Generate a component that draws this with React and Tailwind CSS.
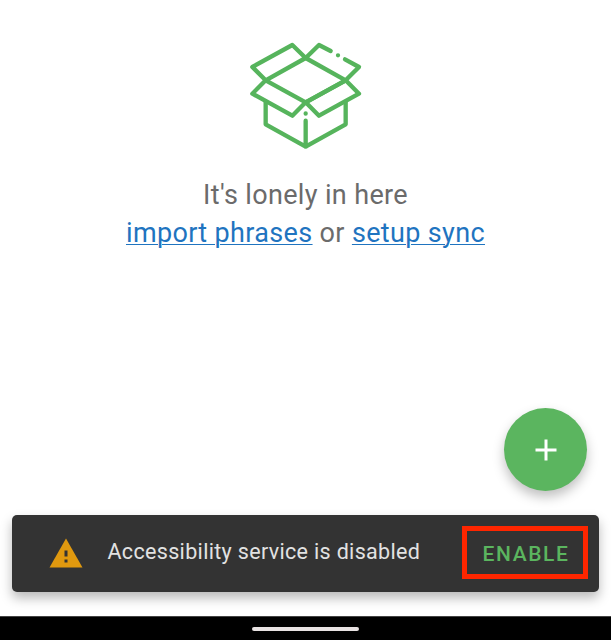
function BoxIcon() {
  return (
    <svg viewBox="0 0 390 366" className="mr-px h-[122px] w-[130px]" fill="none" stroke="#56b45c" strokeWidth="13" strokeLinecap="round" strokeLinejoin="round">
      <path d="M77 139 37 99 157 33 197 72ZM77 139 37 179 157 245 197 205ZM197 205 237 245 357 179 317 139Z" />
      <path d="M197 205 317 139 197 72 237 33 272 51M315 76 357 99 317 139" />
      <path d="M77 204V271L197 338 317 271V204M197 338V260M197 238.500v.01M294 64v.01" />
    </svg>
  );
}

function EmptyState() {
  return (
    <div className="flex flex-col items-center text-[27px] leading-[38px] text-[#6b6b6b]">
      <BoxIcon />
      <div className="mt-[20px] tracking-[0.35px]">It's lonely in here</div>
      <div className="tracking-[0.35px]">
        <a className="text-[#1f74c0] underline decoration-1 underline-offset-[2px]">import phrases</a>
        {" or "}
        <a className="text-[#1f74c0] underline decoration-1 underline-offset-[2px]">setup sync</a>
      </div>
    </div>
  );
}

function Snackbar() {
  return (
    <div className="mx-3 mt-6 flex h-[77px] items-center rounded-[5px] bg-[#333333] pr-[11px] pl-[37px] shadow-[0_6px_12px_rgba(0,0,0,0.28)]">
      <svg viewBox="0 0 34 30" className="mt-[-2px] h-[30px] w-[34px]">
        <path d="M17 .5 33.500 29.500H.5Z" fill="#e0990f" />
        <path d="M15.500 12.500h3v6h-3zM15.500 21.500h3v3h-3z" fill="#333333" />
      </svg>
      <span className="ml-[24.5px] mt-[-3px] text-[21.5px] tracking-[0.33px] whitespace-nowrap text-[#e2e2e2]">Accessibility service is disabled</span>
      <button className="mt-[-2px] ml-auto flex h-[53px] w-[126px] items-center justify-center border-[5px] border-[#ff2600] pt-[5px] pl-[2px] text-[21px] font-medium tracking-[1.6px] text-[#5bb55f]">
        ENABLE
      </button>
    </div>
  );
}

export default function App() {
  return (
    <main className="flex h-[640px] w-[611px] flex-col overflow-hidden bg-white pt-[34px] font-['Roboto',sans-serif]">
      <EmptyState />
      <div className="mt-auto mr-6 flex size-[83px] shrink-0 items-center justify-center self-end rounded-full bg-[#5bb55f] shadow-[0_6px_12px_rgba(0,0,0,0.25)]">
        <svg viewBox="0 0 22 22" className="size-[22px]" stroke="white" strokeWidth="3">
          <path d="M.5 11h21M11 .5v21" />
        </svg>
      </div>
      <Snackbar />
      <div className="mt-[24px] flex h-6 shrink-0 justify-center border-t border-[#444] bg-black pt-[10px]">
        <div className="h-[4px] w-[107px] rounded-full bg-[#e8e2e2]" />
      </div>
    </main>
  );
}
